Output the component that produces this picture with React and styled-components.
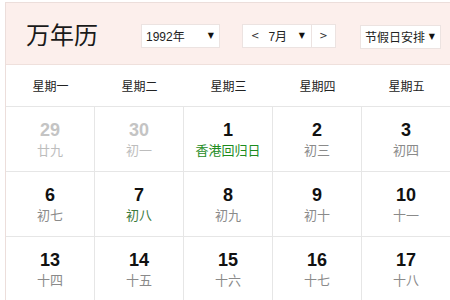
import React from "react";
import styled, { createGlobalStyle } from "styled-components";

const Global = createGlobalStyle`
  html, body { margin: 0; padding: 0; overflow: hidden; background: #fff; }
  body { font-family: "Liberation Sans", "Noto Sans CJK SC", sans-serif; }
`;

const Page = styled.div`
  padding: 2px 0 0 5px;
  width: 445px;
`;

const Calendar = styled.div`
  width: 445px;
  border-top: 1px solid #ecdedb;
  border-left: 1px solid #ecdedb;
  background: #fff;
`;

const Header = styled.div`
  height: 62px;
  box-sizing: border-box;
  background: #fcefec;
  border-bottom: 1px solid #efe0dc;
  display: flex;
  align-items: center;
  padding: 4px 0 0 20px;
`;

const Title = styled.h1`
  margin: 0 43px 4px 0;
  font-size: 24px;
  font-weight: normal;
  line-height: 30px;
  color: #1a1a1a;
  font-family: "Noto Sans CJK SC", sans-serif;
`;

const Select = styled.div`
  box-sizing: border-box;
  height: 24px;
  width: ${(p) => p.$w}px;
  margin-right: ${(p) => p.$mr || 0}px;
  margin-top: ${(p) => p.$mt || 0}px;
  background: #fff;
  border: 1px solid #ece3e1;
  display: flex;
  align-items: center;
  justify-content: space-between;
  padding: 0 5px 0 4px;
  font-size: 12px;
  color: #222;
`;

const Arrow = styled.span`
  font-family: "DejaVu Sans", sans-serif;
  font-size: 8px;
  color: #111;
`;

const MonthGroup = styled.div`
  box-sizing: border-box;
  height: 24px;
  width: 94px;
  margin-right: 24px;
  background: #fff;
  border: 1px solid #ece3e1;
  display: flex;
  align-items: stretch;
  font-size: 12px;
  color: #222;
`;

const MonthMain = styled.div`
  flex: 1;
  display: flex;
  align-items: center;
  padding: 0 6px 0 8px;
  border-right: 1px solid #ece3e1;
`;

const Nav = styled.span`
  font-size: 10px;
  color: #333;
  font-family: "DejaVu Sans", sans-serif;
`;

const MonthText = styled.span`
  margin-left: 9px;
  flex: 1;
`;

const NavBtn = styled.div`
  width: 23px;
  display: flex;
  align-items: center;
  justify-content: center;
`;

const Grid = styled.div`
  display: grid;
  grid-template-columns: repeat(5, 89px);
`;

const WeekCell = styled.div`
  box-sizing: border-box;
  height: 42px;
  border-bottom: 1px solid #e6e6e6;
  display: flex;
  align-items: center;
  justify-content: center;
  font-size: 12px;
  color: #222;
  font-family: "Noto Sans CJK SC", sans-serif;
`;

const DayCell = styled.div`
  box-sizing: border-box;
  height: 65px;
  border-right: 1px solid #e6e6e6;
  border-bottom: 1px solid #e6e6e6;
  display: flex;
  flex-direction: column;
  align-items: center;
  padding-top: 12px;
`;

const DayNum = styled.div`
  font-family: "Liberation Sans", sans-serif;
  font-weight: bold;
  font-size: 18px;
  line-height: 22px;
  color: ${(p) => (p.$other ? "#c4c4c4" : "#111")};
`;

const Lunar = styled.div`
  margin-top: 1px;
  font-family: "Noto Sans CJK SC", sans-serif;
  font-size: 13px;
  line-height: 16px;
  color: ${(p) => p.$color};
`;

const weekdays = ["星期一", "星期二", "星期三", "星期四", "星期五"];

const days = [
  { d: 29, l: "廿九", other: true },
  { d: 30, l: "初一", other: true },
  { d: 1, l: "香港回归日", fest: true },
  { d: 2, l: "初三" },
  { d: 3, l: "初四" },
  { d: 6, l: "初七" },
  { d: 7, l: "初八", term: true },
  { d: 8, l: "初九" },
  { d: 9, l: "初十" },
  { d: 10, l: "十一" },
  { d: 13, l: "十四" },
  { d: 14, l: "十五" },
  { d: 15, l: "十六" },
  { d: 16, l: "十七" },
  { d: 17, l: "十八" },
];

const lunarColor = (x) =>
  x.other ? "#bdbdbd" : x.fest ? "#1e8c1e" : x.term ? "#3b7a3b" : "#8a8a8a";

export default function App() {
  return (
    <>
      <Global />
      <Page>
        <Calendar>
          <Header>
            <Title>万年历</Title>
            <Select $w={79} $mr={22}>
              <span>1992年</span>
              <Arrow>▼</Arrow>
            </Select>
            <MonthGroup>
              <MonthMain>
                <Nav>&lt;</Nav>
                <MonthText>7月</MonthText>
                <Arrow>▼</Arrow>
              </MonthMain>
              <NavBtn>
                <Nav>&gt;</Nav>
              </NavBtn>
            </MonthGroup>
            <Select $w={81} $mt={2}>
              <span>节假日安排</span>
              <Arrow>▼</Arrow>
            </Select>
          </Header>
          <Grid>
            {weekdays.map((w) => (
              <WeekCell key={w}>{w}</WeekCell>
            ))}
            {days.map((x, i) => (
              <DayCell key={i}>
                <DayNum $other={x.other}>{x.d}</DayNum>
                <Lunar $color={lunarColor(x)}>{x.l}</Lunar>
              </DayCell>
            ))}
          </Grid>
        </Calendar>
      </Page>
    </>
  );
}
